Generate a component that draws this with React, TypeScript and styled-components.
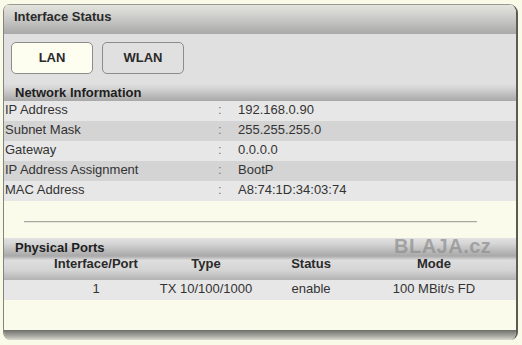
import styled, { createGlobalStyle } from "styled-components";

const GlobalStyle = createGlobalStyle`
  body {
    margin: 0;
    background: #fafae9;
    font-family: "Liberation Sans", Arial, sans-serif;
    color: #222;
  }
`;

const Page = styled.div`
  padding: 4px 4px 5px 3px;
`;

const Panel = styled.div`
  position: relative;
  width: 512px;
  height: 336px;
  display: flex;
  flex-direction: column;
  background: #fbfbeb;
  border-left: 1px solid #84847a;
  border-right: 2px solid #5c5c52;
  border-radius: 7px 9px 8px 8px;
  overflow: hidden;
`;

const TitleBar = styled.div`
  height: 30px;
  flex: none;
  box-sizing: border-box;
  display: flex;
  align-items: center;
  padding: 0 0 5px 10px;
  font-size: 13px;
  font-weight: bold;
  color: #2a2a2a;
  box-shadow: inset 0 1px 0 #9a9a90;
  background: linear-gradient(#e6e6df 0%, #d2d2cf 35%, #a9a9a9 100%);
`;

const TabArea = styled.div`
  height: 48px;
  flex: none;
  display: flex;
  gap: 9px;
  padding: 8px 0 0 7px;
  box-sizing: border-box;
  background: #e0e0e0;
`;

const Tab = styled.div<{ $active?: boolean }>`
  width: 82px;
  height: 32px;
  box-sizing: border-box;
  display: flex;
  align-items: center;
  justify-content: center;
  padding-bottom: 2px;
  font-size: 13px;
  font-weight: bold;
  color: #2a2a2a;
  border: 1px solid #8c8c8c;
  border-radius: 5px;
  background: ${({ $active }) => ($active ? "#fdfdf0" : "#e0e0e0")};
`;

const SectionHeader = styled.div<{ $h: number }>`
  height: ${({ $h }) => $h}px;
  flex: none;
  display: flex;
  align-items: flex-end;
  padding-left: 11px;
  font-size: 13px;
  font-weight: bold;
  color: #1e1e1e;
  line-height: 17px;
  background: linear-gradient(#e2e2e2 0%, #d6d6d6 30%, #b8b8b8 75%, #a9a9a9 100%);
`;

const InfoRow = styled.div<{ $dark?: boolean }>`
  height: 20px;
  flex: none;
  box-sizing: border-box;
  display: grid;
  grid-template-columns: 213px 20px 1fr;
  align-items: center;
  padding: 0 0 3px 1px;
  font-size: 13px;
  color: #333;
  background: ${({ $dark }) => ($dark ? "#d4d4d4" : "#e7e7e7")};
`;

const Colon = styled.span`
  color: #777;
`;

const Divider = styled.div`
  height: 37px;
  flex: none;
  box-sizing: border-box;
  padding: 20px 39px 0 20px;

  &::after {
    content: "";
    display: block;
    height: 1px;
    background: #a8a8a0;
    border-bottom: 1px solid #e6e6dc;
  }
`;

const TableRow = styled.div<{ $head?: boolean }>`
  height: ${({ $head }) => ($head ? 24 : 20)}px;
  flex: none;
  box-sizing: border-box;
  display: grid;
  grid-template-columns: 110px 110px 100px 146px;
  align-items: start;
  padding: ${({ $head }) => ($head ? "0" : "1px")} 0 0 37px;
  line-height: 15px;
  font-size: 13px;
  font-weight: ${({ $head }) => ($head ? "bold" : "normal")};
  color: ${({ $head }) => ($head ? "#2a2a2a" : "#333")};
  text-align: center;
  background: ${({ $head }) =>
    $head
      ? "linear-gradient(#a9a9a9 0%, #dedede 18%, #d4d4d4 60%, #b2b2b2 100%)"
      : "#e7e7e7"};
`;

const Filler = styled.div`
  flex: 1;
`;

const BottomBar = styled.div`
  height: 10px;
  flex: none;
  background: linear-gradient(#6e6e6a, #a8a8a2 60%, #d8d8cf);
`;

const Watermark = styled.div`
  position: absolute;
  left: 390px;
  top: 231px;
  font-size: 20px;
  font-weight: bold;
  letter-spacing: 0.5px;
  color: rgba(145, 145, 145, 0.75);
`;

const info = [
  ["IP Address", "192.168.0.90"],
  ["Subnet Mask", "255.255.255.0"],
  ["Gateway", "0.0.0.0"],
  ["IP Address Assignment", "BootP"],
  ["MAC Address", "A8:74:1D:34:03:74"],
];

export default function App() {
  return (
    <Page>
      <GlobalStyle />
      <Panel>
        <TitleBar>Interface Status</TitleBar>
        <TabArea>
          <Tab $active>LAN</Tab>
          <Tab>WLAN</Tab>
        </TabArea>
        <SectionHeader $h={19}>Network Information</SectionHeader>
        {info.map(([label, value], i) => (
          <InfoRow key={label} $dark={i % 2 === 1}>
            <span>{label}</span>
            <Colon>:</Colon>
            <span>{value}</span>
          </InfoRow>
        ))}
        <Divider />
        <SectionHeader $h={18}>Physical Ports</SectionHeader>
        <TableRow $head>
          <span>Interface/Port</span>
          <span>Type</span>
          <span>Status</span>
          <span>Mode</span>
        </TableRow>
        <TableRow>
          <span>1</span>
          <span>TX 10/100/1000</span>
          <span>enable</span>
          <span>100 MBit/s FD</span>
        </TableRow>
        <Filler />
        <BottomBar />
        <Watermark>BLAJA.cz</Watermark>
      </Panel>
    </Page>
  );
}
